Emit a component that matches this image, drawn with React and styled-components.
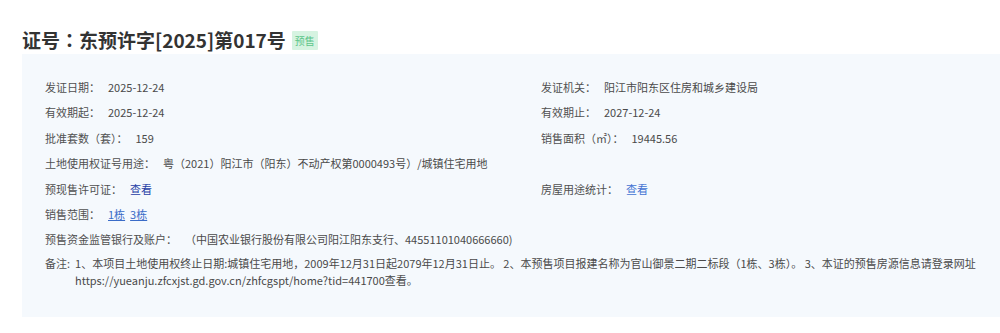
import React from "react";
import styled, { createGlobalStyle } from "styled-components";

const Global = createGlobalStyle`
  html, body { margin: 0; padding: 0; background: #ffffff; overflow: hidden; }
  body { font-family: "Noto Sans CJK SC", "Noto Sans", sans-serif; }
`;

const Page = styled.div`
  padding: 26px 0 0 22px;
`;

const TitleRow = styled.div`
  display: flex;
  align-items: center;
  height: 28px;
`;

const Title = styled.h1`
  margin: 0;
  font-family: "Noto Sans CJK TC", "Noto Sans CJK SC", sans-serif;
  font-size: 19px;
  line-height: 28px;
  font-weight: 700;
  color: #333333;
`;

const Badge = styled.span`
  margin-left: 6px;
  display: inline-flex;
  align-items: center;
  justify-content: center;
  height: 19px;
  padding: 0 3px;
  background: #d6f3e1;
  color: #5cc58a;
  font-size: 10px;
  border-radius: 1px;
`;

const Panel = styled.div`
  background: #f5f9fd;
  padding: 21px 8px 28px 23px;
  font-size: 11px;
  color: #555555;
`;

const Grid = styled.div`
  display: grid;
  grid-template-columns: 496px 1fr;
`;

const Cell = styled.div`
  display: flex;
  line-height: 25.4px;
  white-space: nowrap;
  grid-column: ${(p) => (p.$full ? "1 / -1" : "auto")};
`;

const Label = styled.span`
  color: #505050;
`;

const Value = styled.span`
  margin-left: 8px;
  color: #4a4a4a;
`;

const Link = styled.a`
  color: ${(p) => p.$color || "#3a6cc8"};
  text-decoration: ${(p) => (p.$underline ? "underline" : "none")};
  margin-right: ${(p) => (p.$gap ? "5px" : "0")};
  cursor: pointer;
`;

const Note = styled.div`
  display: flex;
  margin-top: 2.5px;
  line-height: 17px;
`;

const NoteLabel = styled.span`
  flex: none;
  margin-right: 5px;
  color: #505050;
`;

const NoteText = styled.div`
  flex: 1;
  color: #4a4a4a;
`;

const rows = [
  { l: "发证日期：", v: "2025-12-24" },
  { l: "发证机关：", v: "阳江市阳东区住房和城乡建设局" },
  { l: "有效期起：", v: "2025-12-24" },
  { l: "有效期止：", v: "2027-12-24" },
  { l: "批准套数（套）：", v: "159" },
  { l: "销售面积（㎡）：", v: "19445.56" },
];

export default function App() {
  return (
    <>
      <Global />
      <Page>
        <TitleRow>
          <Title>证号：东预许字[2025]第017号</Title>
          <Badge>预售</Badge>
        </TitleRow>
        <Panel>
          <Grid>
            {rows.map((r) => (
              <Cell key={r.l}>
                <Label>{r.l}</Label>
                <Value>{r.v}</Value>
              </Cell>
            ))}
            <Cell $full>
              <Label>土地使用权证号用途：</Label>
              <Value>粤（2021）阳江市（阳东）不动产权第0000493号）/城镇住宅用地</Value>
            </Cell>
            <Cell>
              <Label>预现售许可证：</Label>
              <Value>
                <Link $color="#1f3fa6">查看</Link>
              </Value>
            </Cell>
            <Cell>
              <Label>房屋用途统计：</Label>
              <Value>
                <Link $color="#4373d3">查看</Link>
              </Value>
            </Cell>
            <Cell $full>
              <Label>销售范围：</Label>
              <Value>
                <Link $underline $gap>1栋</Link>
                <Link $underline>3栋</Link>
              </Value>
            </Cell>
            <Cell $full>
              <Label>预售资金监管银行及账户：</Label>
              <Value>（中国农业银行股份有限公司阳江阳东支行、44551101040666660)</Value>
            </Cell>
          </Grid>
          <Note>
            <NoteLabel>备注:</NoteLabel>
            <NoteText>
              1、本项目土地使用权终止日期:城镇住宅用地，2009年12月31日起2079年12月31日止。 2、本预售项目报建名称为官山御景二期二标段（1栋、3栋）。 3、本证的预售房源信息请登录网址https://yueanju.zfcxjst.gd.gov.cn/zhfcgspt/home?tid=441700查看。
            </NoteText>
          </Note>
        </Panel>
      </Page>
    </>
  );
}
